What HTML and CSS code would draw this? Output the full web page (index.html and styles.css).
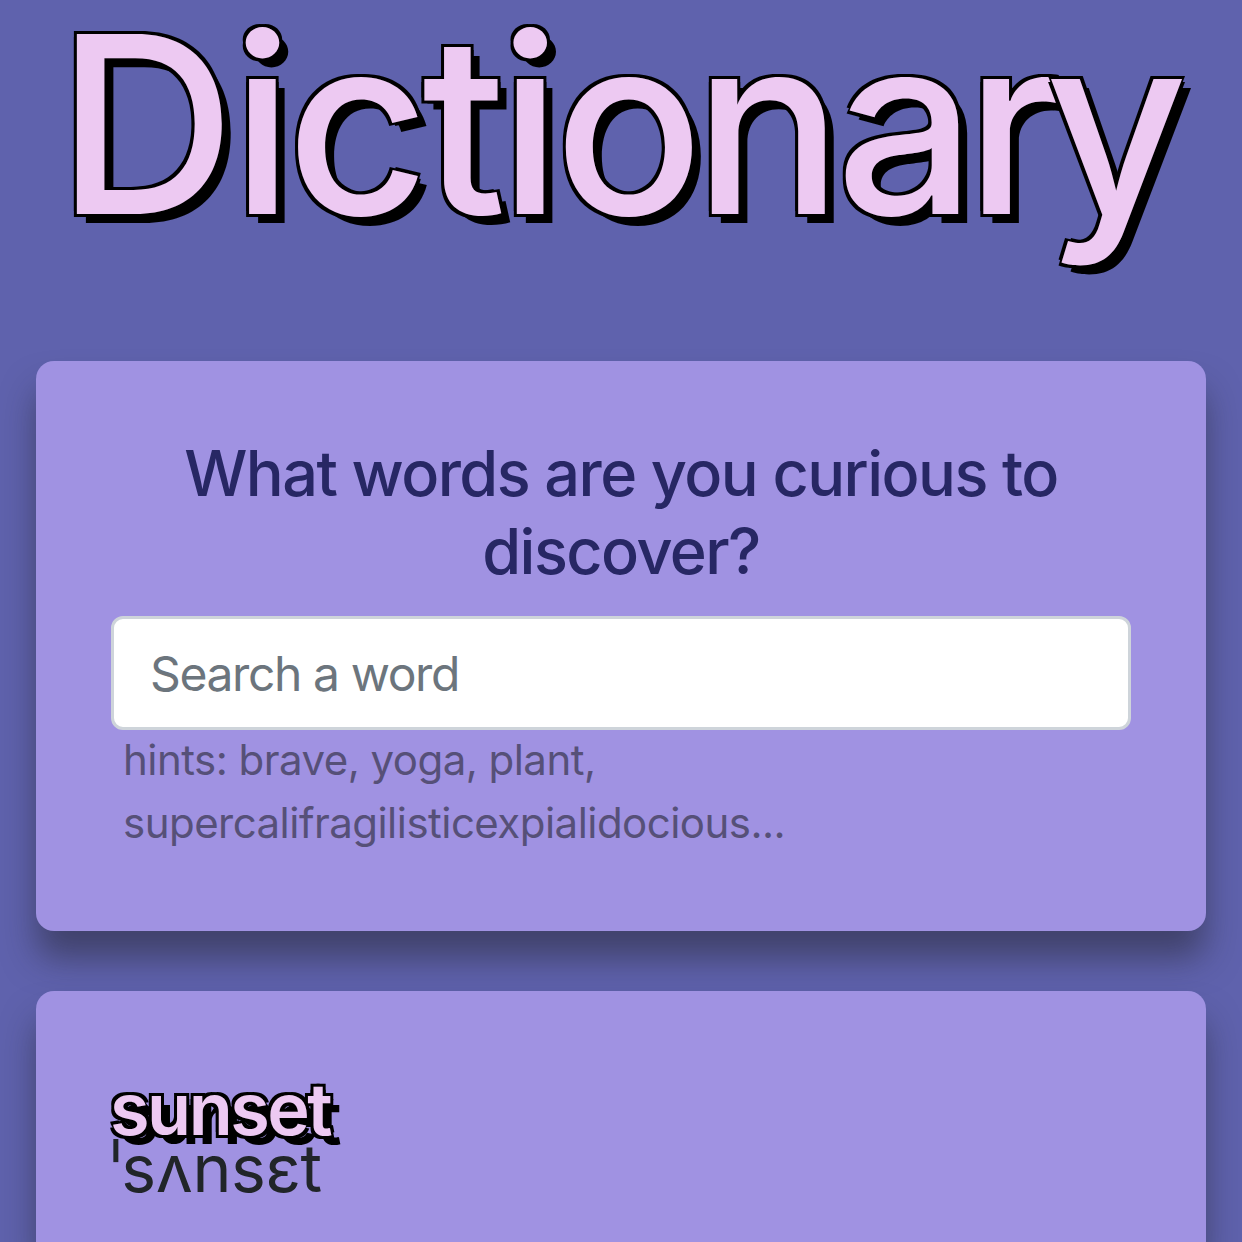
FILE: index.html
```html
<!DOCTYPE html>
<html lang="en">
<head>
<meta charset="utf-8">
<title>Dictionary</title>
<link rel="stylesheet" href="styles.css">
</head>
<body>
<main class="app">
  <h1 class="title"><span class="kern-d">D</span>icti<span class="kern-o">o</span>n<span class="kern-a">a</span><span class="kern-r">r</span>y</h1>
  <section class="card search">
    <h2 class="question">What words are you curious to<br>discover?</h2>
    <form><input class="field" type="search" placeholder="Search a word"></form>
    <p class="hint">hints: brave, yoga, plant,<br>supercalifragilisticexpialidocious...</p>
  </section>
  <section class="card result">
    <h2 class="word">sunset</h2>
    <p class="phonetic"><span class="stress">ˈ</span>sʌnsɛt</p>
  </section>
</main>
</body>
</html>
```
FILE: styles.css
```css
* { box-sizing: border-box; }
html { overflow: hidden; }
body {
  margin: 0;
  height: 1242px;
  overflow: hidden;
  background: #5f62ad;
  color: #212529;
  font-family: Inter, "Noto Sans", sans-serif;
}
.app {
  display: flex;
  flex-direction: column;
  height: 1242px;
  padding: 0 36px;
}
.title,
.word {
  color: #edc9f2;
  text-shadow: -3px -3px 0 #000, 3px -3px 0 #000, -3px 3px 0 #000, 3px 3px 0 #000, 9px 9px 0 #000;
}
.title {
  flex: none;
  margin: 0;
  height: 361px;
  padding: 0 0 0 21px;
  font-size: 247px;
  line-height: 250px;
  font-weight: 500;
  letter-spacing: -7px;
  white-space: nowrap;
}
.kern-d { letter-spacing: -4px; }
.kern-o { letter-spacing: -9.5px; }
.kern-a { letter-spacing: -10.5px; }
.kern-r { letter-spacing: -15.5px; }
.card {
  background: #a092e2;
  border-radius: 18px;
  box-shadow: 0 28px 34px -1px rgba(33, 33, 41, .5);
}
.search { flex: none; height: 570px; padding: 73px 75px 0; }
.question {
  margin: 0;
  text-align: center;
  font-size: 63px;
  line-height: 78px;
  font-weight: 500;
  letter-spacing: -1.55px;
  white-space: nowrap;
  color: #272764;
}
.field {
  display: block;
  width: 1020px;
  height: 114px;
  margin-top: 26px;
  padding: 0 36px;
  border: 3px solid #ced4da;
  border-radius: 12px;
  background: #fff;
  font: 400 48px Inter, sans-serif;
  letter-spacing: -1.4px;
  outline: 0;
  appearance: none;
}
.field::placeholder { color: #6c757d; opacity: 1; }
.hint {
  margin: -2px 0 0 12px;
  font-size: 42px;
  line-height: 63px;
  letter-spacing: -.53px;
  color: #565078;
}
.result {
  flex: 1;
  min-height: 0;
  margin-top: 60px;
  padding: 79px 74px 0;
  border-radius: 18px 18px 0 0;
}
.word {
  margin: 0;
  font-size: 72px;
  line-height: 78px;
  font-weight: 600;
  letter-spacing: -2.5px;
}
.phonetic {
  margin: -19px 0 0;
  font-size: 66px;
  line-height: 78px;
  letter-spacing: -.4px;
}
.stress {
  display: inline-block;
  transform: scaleY(1.75);
  transform-origin: 0 17px;
}
```
